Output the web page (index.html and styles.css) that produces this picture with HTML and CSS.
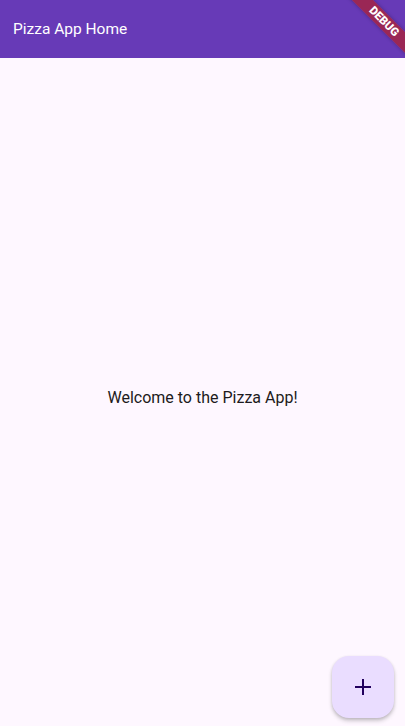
FILE: index.html
```html
<!DOCTYPE html>
<html>
<head>
<meta charset="utf-8">
<link rel="stylesheet" href="styles.css">
</head>
<body>
<div class="app">
  <header class="appbar">
    <h1 class="title">Pizza App Home</h1>
  </header>
  <main class="content">
    <p class="welcome">Welcome to the Pizza App!</p>
  </main>
  <button class="fab" aria-label="Add">
    <svg width="20" height="20" viewBox="0 0 20 20"><path d="M10 2v16M2 10h16" stroke="#21005D" stroke-width="2" fill="none"/></svg>
  </button>
  <div class="banner">DEBUG</div>
</div>
</body>
</html>
```
FILE: styles.css
```css
html, body {
  margin: 0;
  padding: 0;
}
body {
  font-family: Roboto, "Noto Sans", sans-serif;
  background: #FEF7FF;
}
.app {
  position: relative;
  width: 405px;
  height: 726px;
  display: flex;
  flex-direction: column;
  overflow: hidden;
  background: #FEF7FF;
}
.appbar {
  height: 58px;
  flex: none;
  background: #673AB7;
  display: flex;
  align-items: center;
  padding: 0 13px;
}
.title {
  margin: 0;
  color: #fff;
  font-size: 15.5px;
  font-weight: 400;
  letter-spacing: 0;
}
.content {
  flex: 1;
  display: flex;
  align-items: center;
  justify-content: center;
  padding-top: 10px;
}
.welcome {
  margin: 0;
  color: #1D1B20;
  font-size: 16px;
  letter-spacing: 0;
}
.fab {
  position: absolute;
  left: 332px;
  top: 656px;
  width: 62px;
  height: 62px;
  border: none;
  border-radius: 17px;
  background: #EADDFF;
  display: flex;
  align-items: center;
  justify-content: center;
  padding: 0;
  box-shadow: 0 3px 4px rgba(0,0,0,0.18), 0 1px 3px rgba(0,0,0,0.12);
}
.banner {
  position: absolute;
  left: 323.5px;
  top: 14px;
  width: 120px;
  height: 15px;
  line-height: 15px;
  background: rgba(183, 28, 28, 0.63);
  color: #fff;
  font-size: 11.5px;
  font-weight: 900;
  text-align: center;
  transform: rotate(45deg);
  box-shadow: 0 0 4px rgba(0,0,0,0.3);
}
```
